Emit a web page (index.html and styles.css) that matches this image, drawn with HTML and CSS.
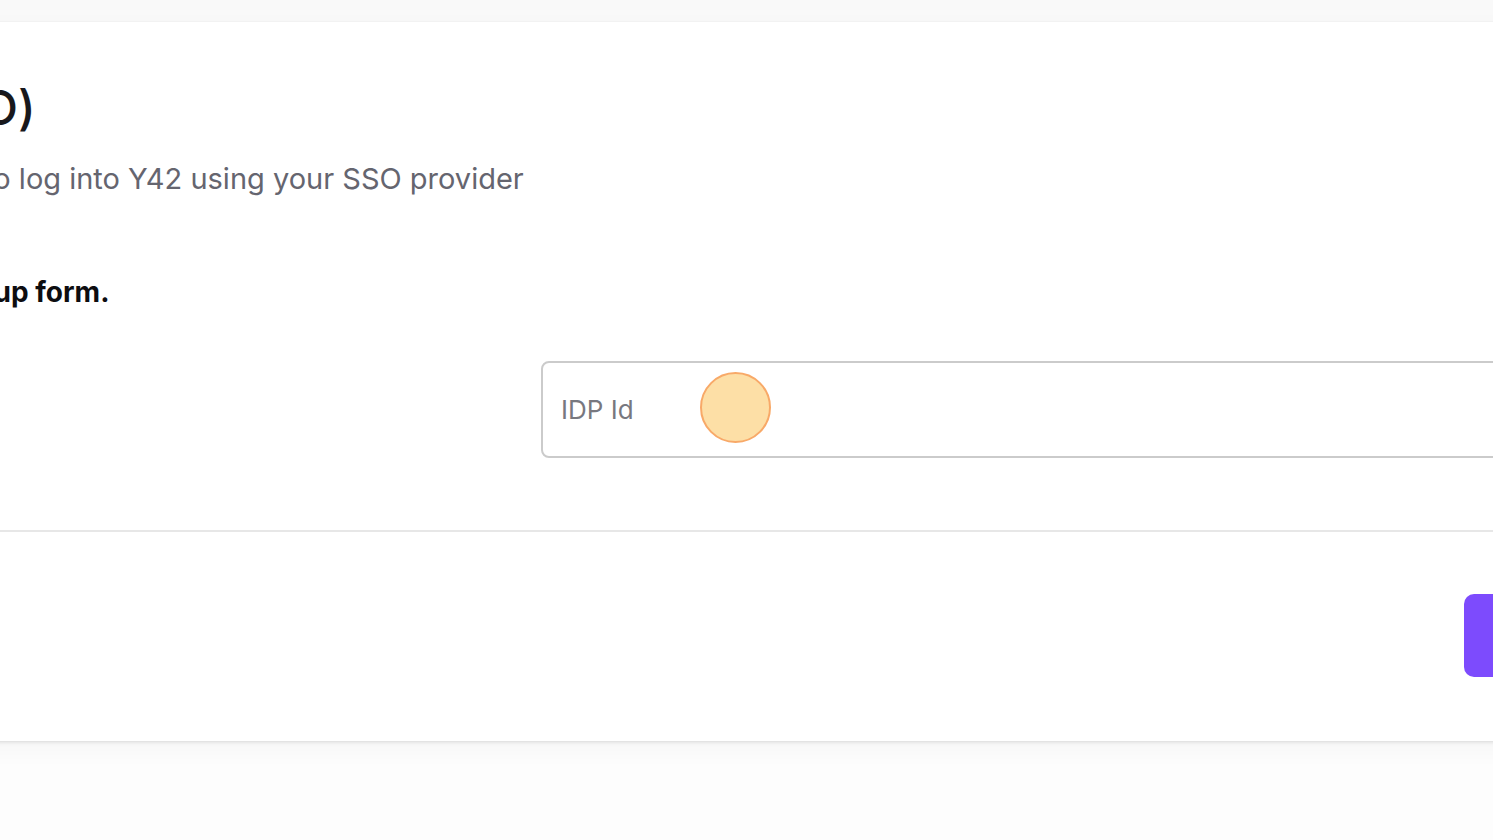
FILE: index.html
```html
<!DOCTYPE html>
<html lang="en">
<head>
<meta charset="utf-8">
<title>Single Sign-On (SSO)</title>
<link rel="stylesheet" href="styles.css">
</head>
<body>
<div class="page">
  <section class="modal">
    <div class="modal-body">
      <h1 class="title">Single Sign-On (SSO)</h1>
      <p class="subtitle">Setup SSO to enable your team to log into Y42 using your SSO provider</p>
      <p class="instruction">Please fill out the following sign-up form.</p>
      <div class="form-row">
        <label class="label" for="idp"></label>
        <div class="field">
          <input id="idp" class="input" type="text" placeholder="IDP Id">
          <span class="click-marker"></span>
        </div>
      </div>
    </div>
    <div class="modal-footer">
      <button class="primary" type="button">Save</button>
    </div>
  </section>
</div>
</body>
</html>
```

FILE: styles.css
```css
* { box-sizing: border-box; }
html, body { margin: 0; padding: 0; }
body {
  background: #fdfdfd;
  font-family: Inter, "Noto Sans", sans-serif;
  overflow: hidden;
  width: 1493px;
  height: 840px;
}
.page {
  padding-top: 22px;
  background: linear-gradient(#f9f9f9 0, #f9f9f9 22px, transparent 22px);
}
.modal {
  margin-left: -500px;
  width: 2300px;
  height: 719px;
  background: #ffffff;
  box-shadow: 0 0 2px rgba(0,0,0,0.05), 0 2px 3px rgba(0,0,0,0.08), 0 8px 24px rgba(0,0,0,0.035);
  display: flex;
  flex-direction: column;
}
.modal-body {
  padding: 57px 48px 72px 48px;
}
.title {
  margin: 0;
  font-size: 48px;
  line-height: 1.2;
  font-weight: 500;
  color: #18181c;
  letter-spacing: -0.2px;
}
.subtitle {
  margin: 22px 0 0 0;
  font-size: 29px;
  line-height: 1.35;
  color: #65656f;
}
.instruction {
  margin: 76px 0 0 0;
  font-size: 28px;
  line-height: 1.3;
  font-weight: 700;
  color: #0d0d10;
}
.form-row {
  margin-top: 51px;
  display: grid;
  grid-template-columns: 993px 1200px;
}
.field {
  position: relative;
}
.input {
  display: block;
  width: 100%;
  height: 97px;
  border: 2px solid #cbcbcb;
  border-radius: 8px;
  padding: 0 18px;
  font-family: Inter, "Noto Sans", sans-serif;
  font-size: 26px;
  color: #222;
  background: #fff;
  outline: none;
}
.input::placeholder { color: #78787f; }
.click-marker {
  position: absolute;
  left: 159px;
  top: 11px;
  width: 71px;
  height: 71px;
  border-radius: 50%;
  background: #fddfa6;
  border: 2px solid #f8a968;
}
.modal-footer {
  border-top: 2px solid #e7e7e7;
  padding: 62px 48px 0 48px;
  display: flex;
  justify-content: flex-end;
}
.primary {
  width: 288px;
  height: 83px;
  border: none;
  border-radius: 10px;
  background: #7d4bfd;
  color: #fff;
  font-family: Inter, "Noto Sans", sans-serif;
  font-size: 26px;
  font-weight: 600;
}
```
